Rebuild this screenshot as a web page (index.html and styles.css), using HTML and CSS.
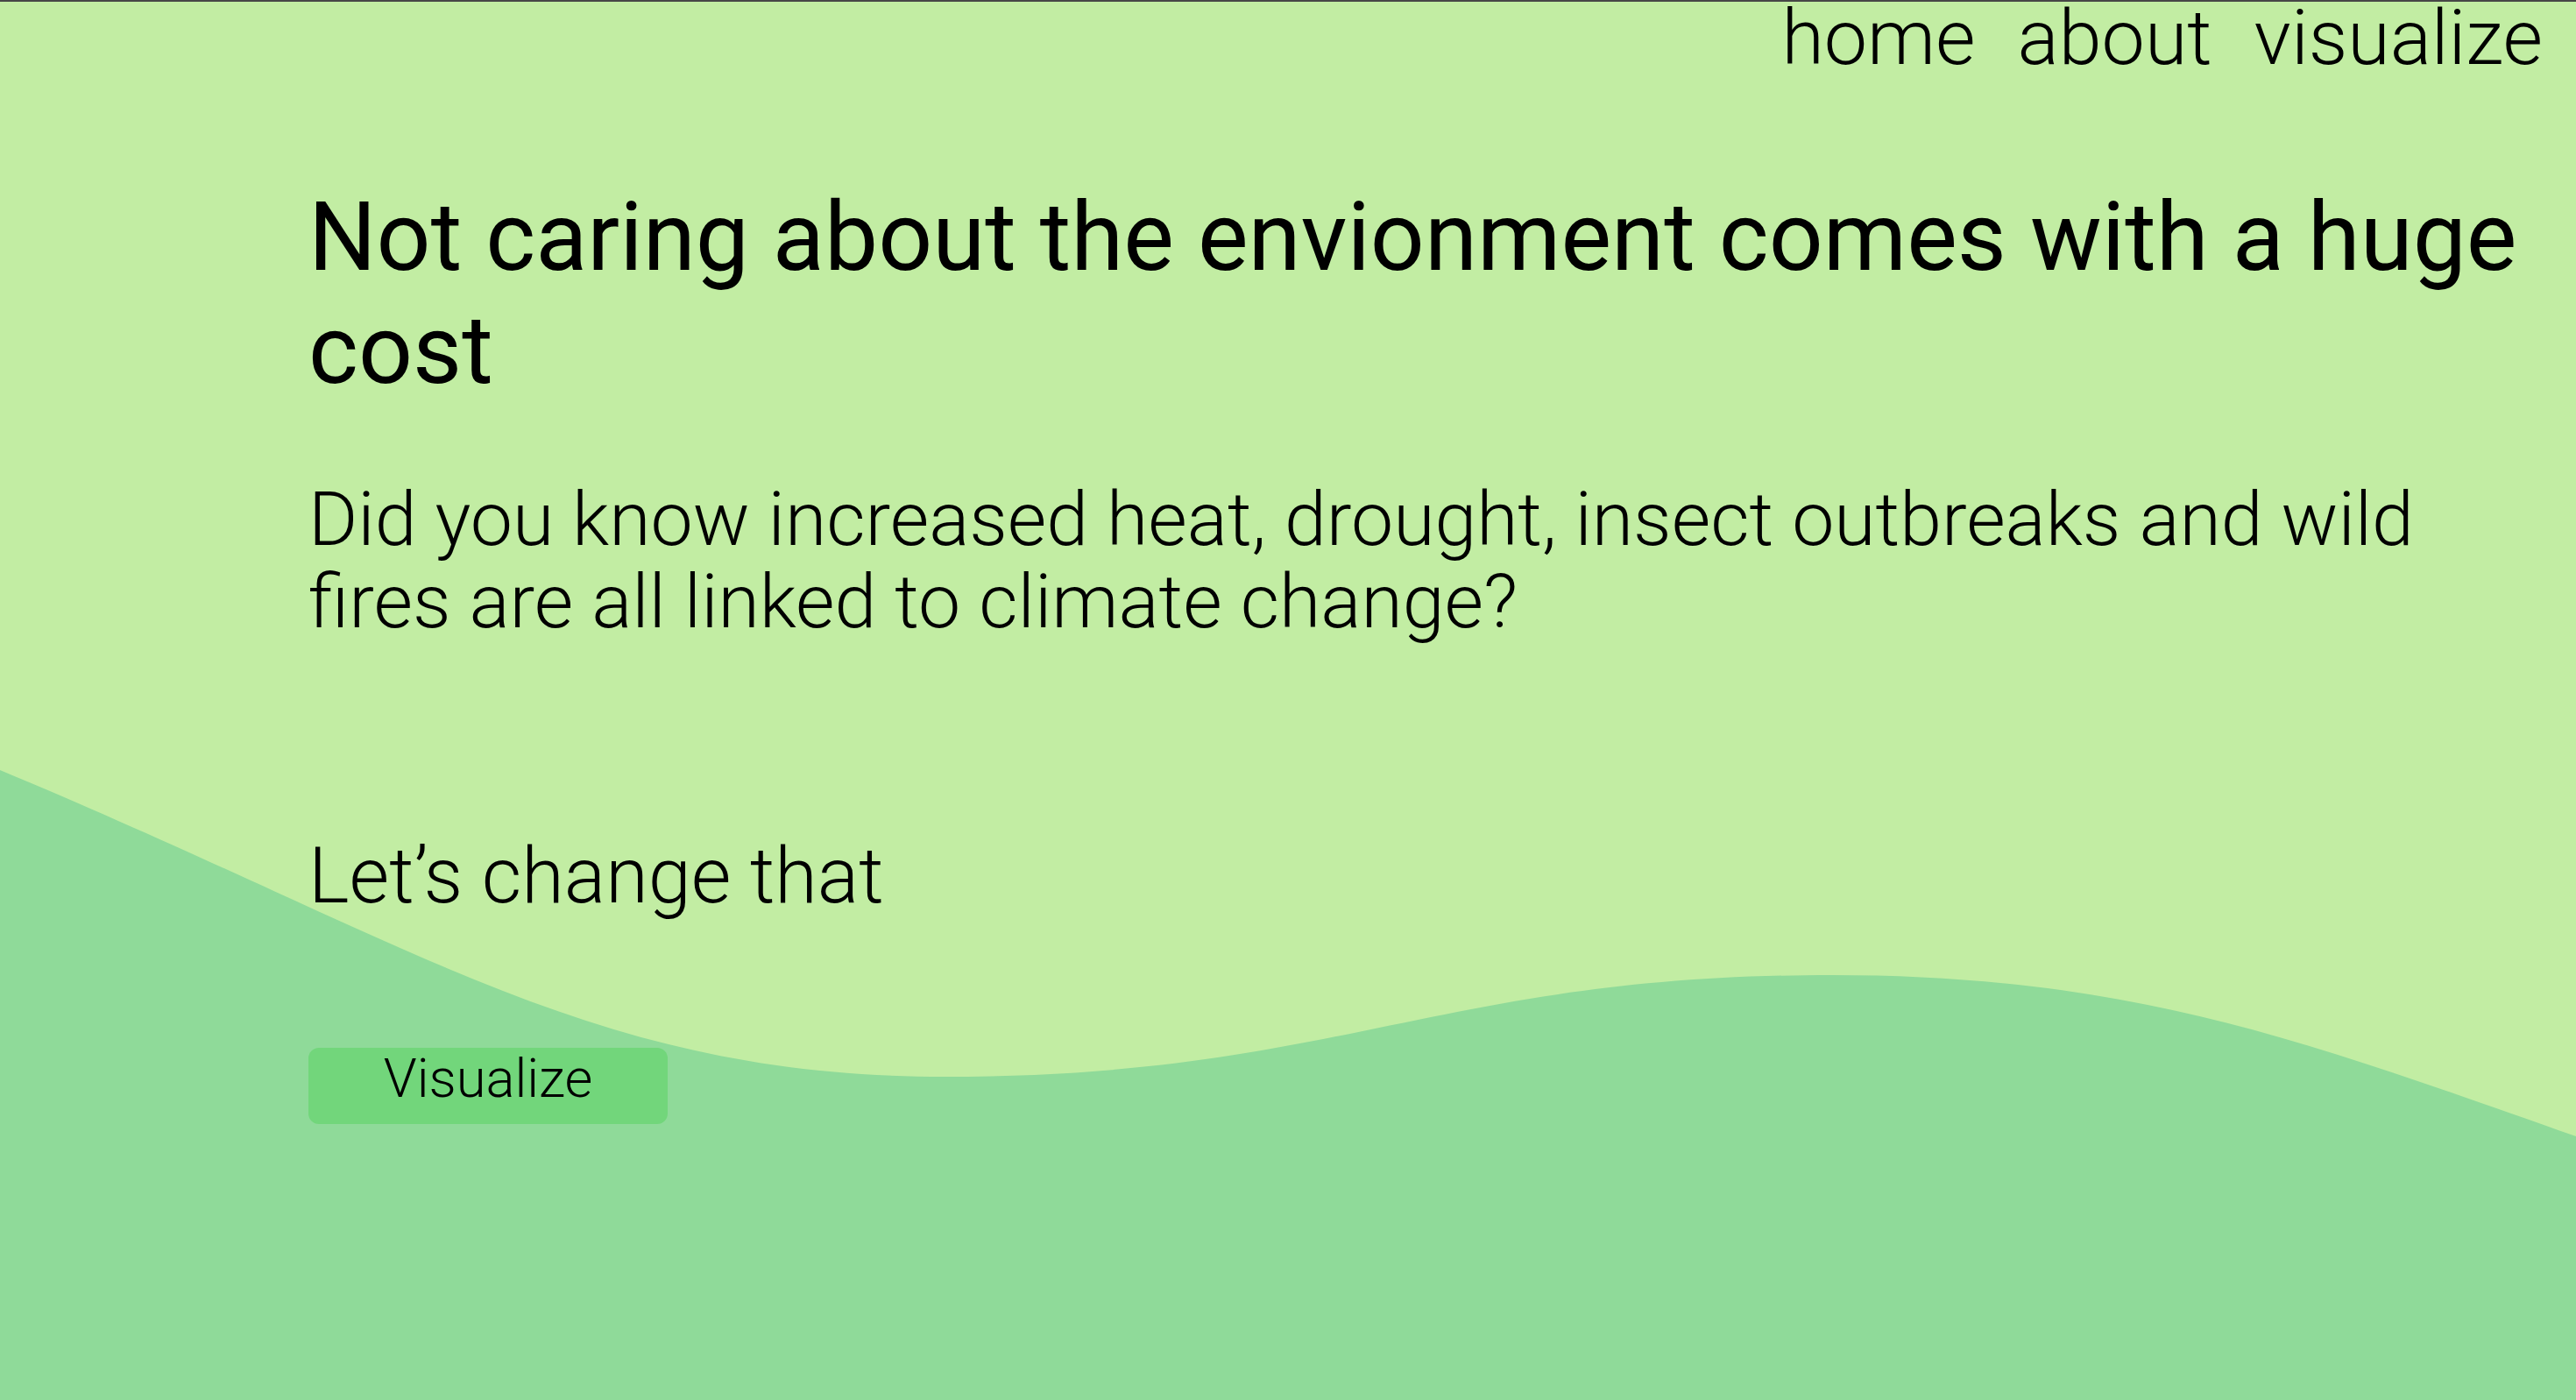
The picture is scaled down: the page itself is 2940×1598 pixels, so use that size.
FILE: index.html
```html
<!DOCTYPE html>
<html lang="en">
<head>
<meta charset="utf-8">
<title>Climate</title>
<link rel="stylesheet" href="styles.css">
</head>
<body>
<svg class="wave" viewBox="0 0 2940 1598" preserveAspectRatio="none" aria-hidden="true">
  <path d="M0,879 C480,1079 678,1229 1078,1229 C1528,1229 1640,1113 2090,1113 C2440,1113 2640,1192 2940,1297 L2940,1598 L0,1598 Z"/>
</svg>
<header class="nav">
  <a class="nav-link" href="#">home</a>
  <a class="nav-link" href="#">about</a>
  <a class="nav-link" href="#">visualize</a>
</header>
<main class="hero">
  <h1 class="hero-title">Not caring about the envionment comes with a huge cost</h1>
  <p class="hero-lead">Did you know increased heat, drought, insect outbreaks and wild fires are all linked to climate change?</p>
  <p class="hero-cta">Let’s change that</p>
  <button class="btn" type="button">Visualize</button>
</main>
</body>
</html>
```

FILE: styles.css
```css
html, body {
  margin: 0;
  padding: 0;
}

body {
  position: relative;
  box-sizing: border-box;
  height: 1598px;
  overflow: hidden;
  background: #c2eda3;
  border-top: 2px solid #474747;
  font-family: Roboto, "Liberation Sans", sans-serif;
  color: #000;
}

.wave {
  position: absolute;
  top: -2px;
  left: 0;
  width: 100%;
  height: 1598px;
  z-index: 0;
}

.wave path {
  fill: #8fda99;
}

.nav {
  position: relative;
  z-index: 1;
  display: flex;
  justify-content: flex-end;
  gap: 48px;
  padding-right: 38px;
  height: 82px;
  line-height: 82px;
}

.nav-link {
  font-size: 88px;
  font-weight: 300;
  color: #000;
  text-decoration: none;
}

.hero {
  position: relative;
  z-index: 1;
  display: flex;
  flex-direction: column;
  align-items: flex-start;
  padding: 0 0 0 352px;
}

.hero-title {
  margin: 123px 0 0;
  font-size: 108.8px;
  font-weight: 400;
  line-height: 129px;
}

.hero-lead {
  margin: 81px 0 0;
  font-size: 86px;
  font-weight: 300;
  line-height: 94px;
  max-width: 2560px;
}

.hero-cta {
  margin: 219px 0 0;
  font-size: 88.3px;
  font-weight: 300;
  line-height: 94px;
}

.btn {
  margin-top: 149px;
  width: 410px;
  height: 87px;
  padding: 0 0 16px;
  border: none;
  border-radius: 12px;
  background: #72d67b;
  font-family: Roboto, "Liberation Sans", sans-serif;
  font-size: 61.5px;
  font-weight: 300;
  line-height: 71px;
  color: #000;
  cursor: pointer;
}
```
